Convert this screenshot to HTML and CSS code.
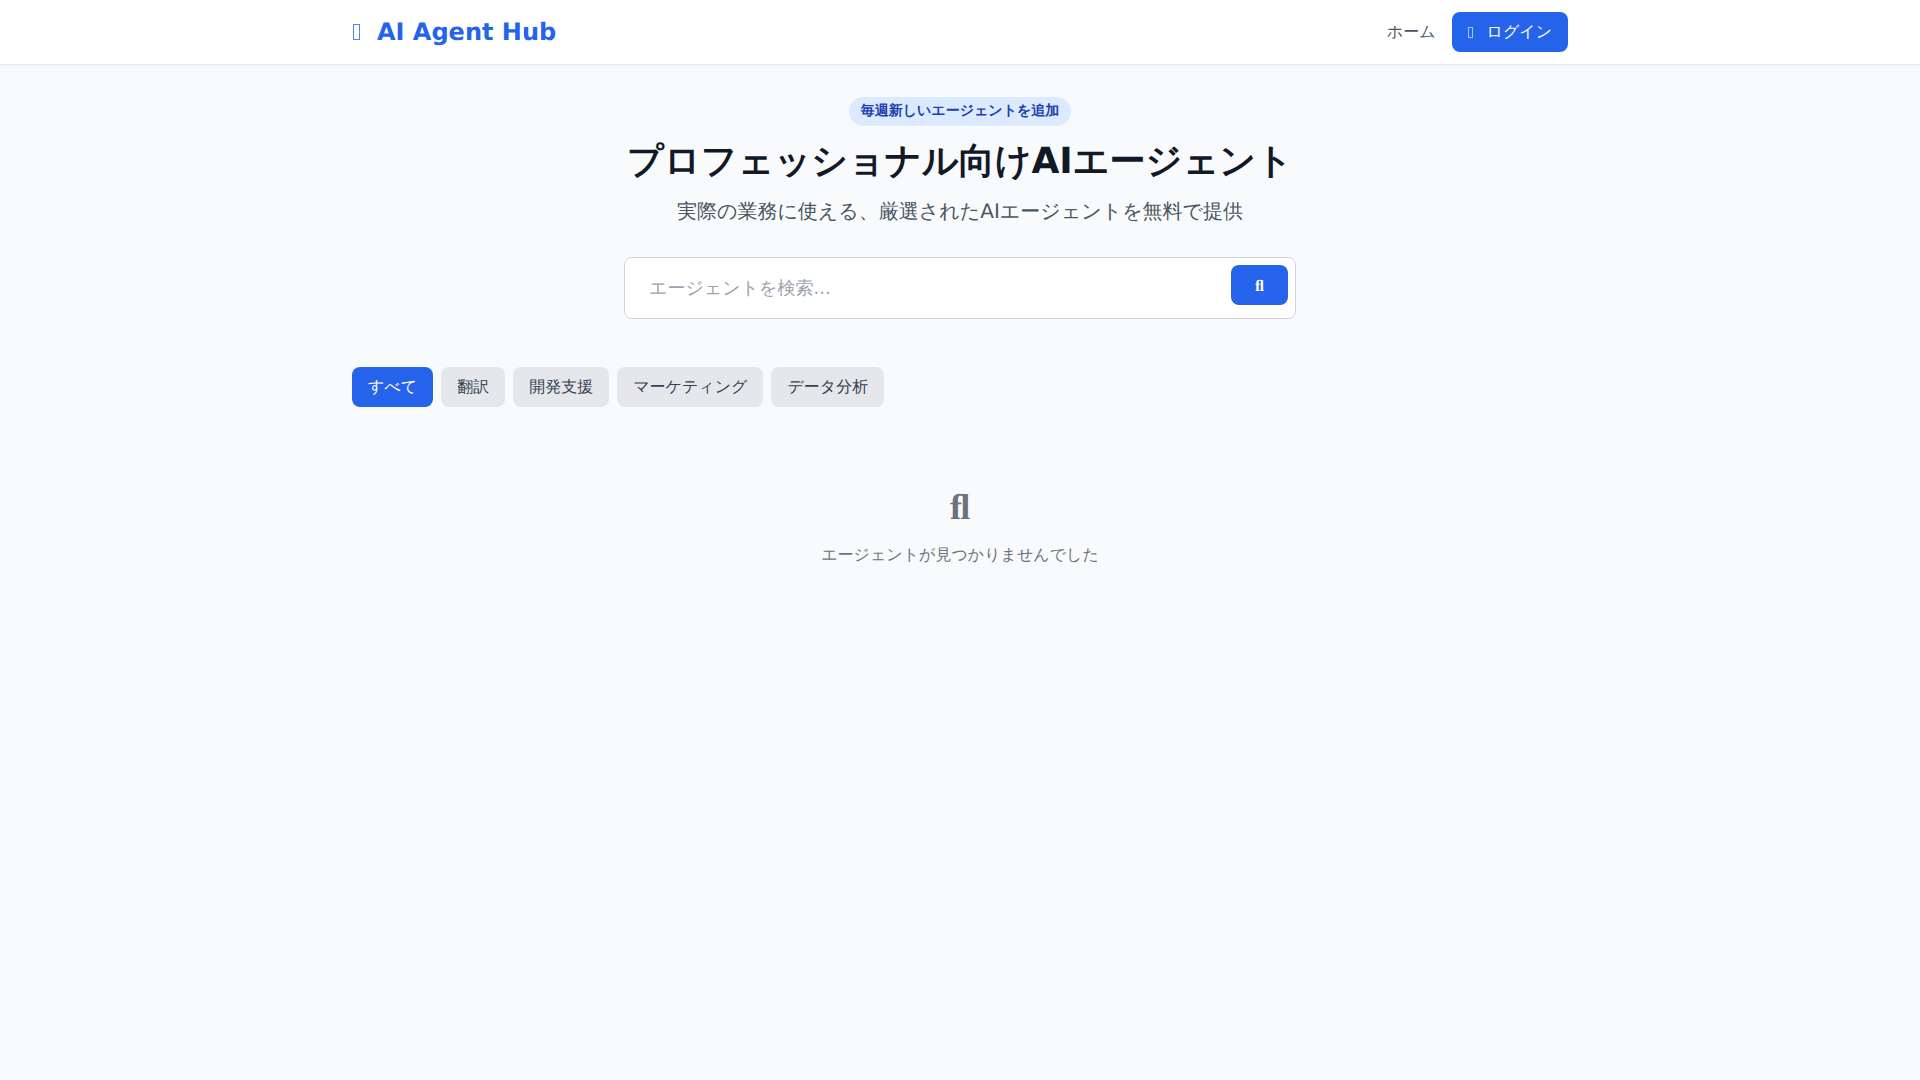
FILE: index.html
```html
<!DOCTYPE html>
<html lang="ja">
<head>
  <meta charset="UTF-8" />
  <meta name="viewport" content="width=device-width, initial-scale=1.0"/>
  <title>AI Agent Hub</title>
  <link rel="stylesheet" href="styles.css">
</head>
<body>
  <header class="header">
    <div class="container header-inner">
      <a class="logo" href="#"><i class="tofu logo-icon"></i>AI Agent Hub</a>
      <nav class="nav">
        <a class="nav-link" href="#">ホーム</a>
        <button class="login-btn"><i class="tofu login-icon"></i>ログイン</button>
      </nav>
    </div>
  </header>

  <main class="container">
    <section class="hero">
      <span class="badge">毎週新しいエージェントを追加</span>
      <h1>プロフェッショナル向けAIエージェント</h1>
      <p class="lead">実際の業務に使える、厳選されたAIエージェントを無料で提供</p>
      <div class="search">
        <input class="search-input" type="text" placeholder="エージェントを検索..." />
        <button class="search-btn"><i class="fl">&#xfb02;</i></button>
      </div>
    </section>

    <div class="filters">
      <button class="filter active">すべて</button>
      <button class="filter">翻訳</button>
      <button class="filter">開発支援</button>
      <button class="filter">マーケティング</button>
      <button class="filter">データ分析</button>
    </div>

    <div class="empty">
      <i class="fl empty-icon">&#xfb02;</i>
      <p class="empty-text">エージェントが見つかりませんでした</p>
    </div>
  </main>
</body>
</html>
```

FILE: styles.css
```css
* {
  box-sizing: border-box;
}

body {
  margin: 0;
  background: #f9fafb;
  color: #111827;
  font-family: "DejaVu Sans", sans-serif;
  line-height: 1.5;
  min-height: 100vh;
  text-rendering: geometricPrecision;
}

a {
  text-decoration: none;
}

button, input {
  font-family: inherit;
  text-rendering: inherit;
}

button {
  border: none;
  cursor: pointer;
}

/* hollow box, the missing-glyph look of the icons */
.tofu {
  display: block;
  flex-shrink: 0;
  border: 1px solid currentColor;
}

.fl {
  font-family: "Liberation Serif", serif;
  font-style: normal;
  font-weight: 700;
  line-height: 1;
}

.container {
  width: 1280px;
  margin: 0 auto;
  padding: 0 32px;
}

.header {
  background: white;
  height: 64px;
  box-shadow: 0 1px 2px rgba(0, 0, 0, 0.1);
}

.header-inner {
  display: flex;
  justify-content: space-between;
  align-items: center;
  height: 64px;
}

.logo {
  display: flex;
  align-items: center;
  color: #2563eb;
  font-size: 24px;
  font-weight: 700;
}

.logo-icon {
  width: 7px;
  height: 16px;
  margin: 0 17px 0 1px;
  opacity: 0.8;
}

.nav {
  display: flex;
  align-items: center;
  gap: 16px;
}

.nav-link {
  color: #4b5563;
  font-size: 16px;
}

.login-btn {
  display: flex;
  align-items: center;
  height: 40px;
  padding: 0 16px;
  background: #2563eb;
  color: white;
  font-size: 16px;
  border-radius: 8px;
}

.login-icon {
  width: 5px;
  height: 11px;
  margin-right: 14px;
  opacity: 0.6;
}

.hero {
  display: flex;
  flex-direction: column;
  align-items: center;
  padding-top: 33px;
}

.badge {
  padding: 4px 12px;
  background: #dbeafe;
  color: #1e40af;
  font-size: 14px;
  font-weight: 600;
  border-radius: 9999px;
}

h1 {
  margin: 16px 0 15px;
  font-size: 36px;
  font-weight: 700;
  line-height: 40px;
  color: #111827;
}

.lead {
  margin: 0 0 32px;
  color: #4b5563;
  font-size: 20px;
  line-height: 28px;
}

.search {
  position: relative;
  width: 672px;
}

.search-input {
  display: block;
  width: 100%;
  padding: 17px 24px 15px;
  background: white;
  border: 1px solid #d1d5db;
  border-radius: 8px;
  font-size: 18px;
  line-height: 28px;
  color: #111827;
}

.search-input::placeholder {
  color: #9ca3af;
}

.search-btn {
  position: absolute;
  top: 8px;
  right: 8px;
  height: 40px;
  padding: 0 24px;
  background: #2563eb;
  color: white;
  font-size: 16px;
  border-radius: 8px;
}

.filters {
  display: flex;
  gap: 8px;
  margin-top: 48px;
}

.filter {
  height: 40px;
  padding: 0 16px;
  background: #e5e7eb;
  color: #374151;
  font-size: 16px;
  border-radius: 8px;
}

.filter.active {
  background: #2563eb;
  color: white;
}

.empty {
  display: flex;
  flex-direction: column;
  align-items: center;
  margin-top: 80px;
  color: #6b7280;
}

.empty-icon {
  font-size: 36px;
  line-height: 40px;
}

.empty-text {
  margin: 16px 0 0;
  font-size: 16px;
}
```
